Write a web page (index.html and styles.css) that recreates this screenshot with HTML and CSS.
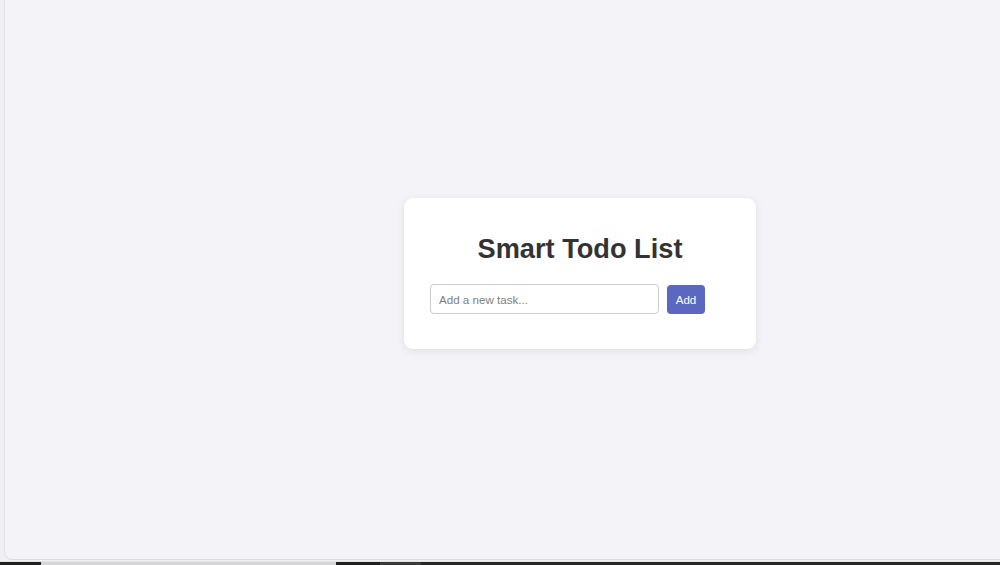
FILE: index.html
```html
<!DOCTYPE html>
<html lang="en">
<head>
<meta charset="utf-8">
<title>Smart Todo List</title>
<link rel="stylesheet" href="styles.css">
</head>
<body>
<div class="screen">
  <div class="viewport">
    <div class="card">
      <h1 class="title">Smart Todo List</h1>
      <div class="add-row">
        <input class="task-input" type="text" placeholder="Add a new task...">
        <button class="add-btn">Add</button>
      </div>
    </div>
  </div>
  <div class="taskbar">
    <span class="seg seg-dark1"></span>
    <span class="seg seg-light"></span>
    <span class="seg seg-dark2"></span>
    <span class="seg seg-mid"></span>
    <span class="seg seg-rest"></span>
  </div>
</div>
</body>
</html>
```
FILE: styles.css
```css
* { box-sizing: border-box; }
html, body {
  margin: 0;
  padding: 0;
  width: 1000px;
  height: 565px;
  overflow: hidden;
  background: #f4f4f7;
  font-family: "Liberation Sans", Arial, sans-serif;
}
.screen {
  height: 565px;
  display: flex;
  flex-direction: column;
  background: #f0f0f2;
}
.viewport {
  height: 561px;
  margin-left: 4px;
  background: #f4f4f8;
  border-left: 1px solid #e2e2e6;
  border-bottom: 1px solid #dcdce0;
  border-bottom-left-radius: 8px;
  padding-top: 198px;
  padding-left: 399px;
}
.card {
  width: 352px;
  background: #ffffff;
  border-radius: 9px;
  box-shadow: 0 2px 8px rgba(0, 0, 0, 0.09);
  padding: 35px 26px 35px;
}
.title {
  margin: 0 0 19px;
  text-align: center;
  font-size: 27.2px;
  line-height: 32px;
  font-weight: bold;
  color: #333333;
}
.add-row {
  display: flex;
  align-items: center;
  gap: 8px;
}
.task-input {
  width: 229px;
  height: 30px;
  padding: 0 8px;
  border: 1px solid #cccccc;
  border-radius: 4px;
  font-family: "Liberation Sans", Arial, sans-serif;
  font-size: 11.6px;
  color: #333;
  background: #fff;
  outline: none;
}
.task-input::placeholder { color: #808080; }
.add-btn {
  width: 38px;
  height: 29px;
  border: none;
  border-radius: 4px;
  background: #5c67c0;
  color: #ffffff;
  font-family: "Liberation Sans", Arial, sans-serif;
  font-size: 11.6px;
  padding: 0;
}
.taskbar {
  height: 4px;
  display: flex;
  margin-top: 1px;
  border-top: 1px solid #e4e4e6;
}
.seg { display: block; height: 100%; }
.seg-dark1 { width: 41px; background: #1f1f1f; }
.seg-light { width: 295px; background: #d6d6d8; }
.seg-dark2 { width: 44px; background: #202020; }
.seg-mid { width: 41px; background: #3a3a3a; }
.seg-rest { flex: 1; background: #262626; }
```
